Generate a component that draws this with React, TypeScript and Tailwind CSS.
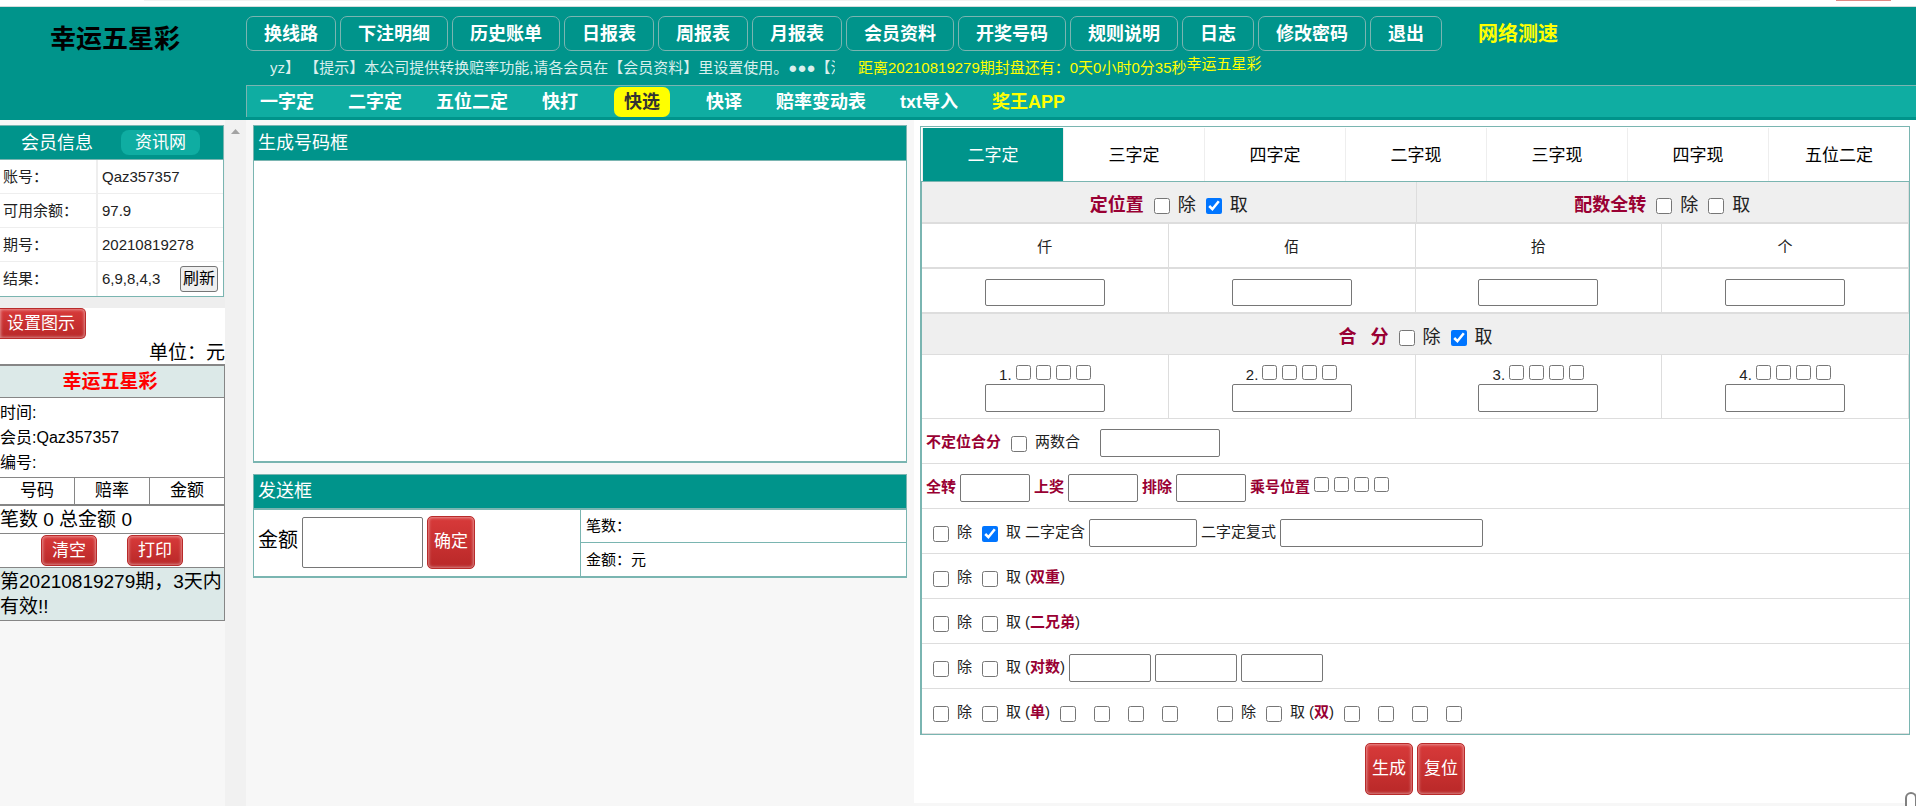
import React, { useState } from 'react';
import clsx from 'clsx';

const mainMenu = [
  '换线路', '下注明细', '历史账单', '日报表', '周报表', '月报表',
  '会员资料', '开奖号码', '规则说明', '日志', '修改密码', '退出',
];

const subMenu = ['一字定', '二字定', '五位二定', '快打', '快选', '快译', '赔率变动表', 'txt导入', '奖王APP'];

const tabs = ['二字定', '三字定', '四字定', '二字现', '三字现', '四字现', '五位二定'];

const member = [
  { label: '账号：', value: 'Qaz357357' },
  { label: '可用余额：', value: '97.9' },
  { label: '期号：', value: '20210819278' },
  { label: '结果：', value: '6,9,8,4,3', refresh: true },
];

const digits = ['仟', '佰', '拾', '个'];

const RedButton = ({ children, className }: { children: React.ReactNode; className?: string }) => (
  <button
    type="button"
    className={clsx(
      'rounded-[5px] border border-[#b92b2b] bg-linear-to-b from-[#d83a3a] to-[#b92828] text-[17px] text-white shadow-[inset_0_0_3px_1px_rgba(255,255,255,0.45)]',
      className
    )}
  >
    {children}
  </button>
);

const TextBox = ({ label, className }: { label: string; className?: string }) => (
  <input
    type="text"
    aria-label={label}
    className={clsx('rounded-[2px] border border-[#767676] bg-white px-1', className)}
  />
);

const Check = ({ label, checked = false }: { label: string; checked?: boolean }) => (
  <label className="flex items-center gap-2">
    <input type="checkbox" defaultChecked={checked} className="mt-[2px] h-4 w-4" />
    {label}
  </label>
);

// 除 / 取 pair
const Pair = ({ take = false }: { take?: boolean }) => (
  <div className="flex gap-[10px]">
    <Check label="除" />
    <Check label="取" checked={take} />
  </div>
);

const SmallChecks = ({ name }: { name: string }) => (
  <div className="flex gap-[5px]">
    {digits.map((d) => (
      <input key={d} type="checkbox" aria-label={`${name} ${d}`} className="h-[15px] w-[15px]" />
    ))}
  </div>
);

const WideChecks = ({ name }: { name: string }) => (
  <div className="flex gap-[18px]">
    {digits.map((d) => (
      <input key={d} type="checkbox" aria-label={`${name} ${d}`} className="mt-[2px] h-4 w-4" />
    ))}
  </div>
);

const Mark = ({ children }: { children: React.ReactNode }) => (
  <span className="font-bold text-[#990033]">{children}</span>
);

const Row = ({ children, className }: { children: React.ReactNode; className?: string }) => (
  <div className={clsx('flex h-[45px] items-center border-b border-[#ddd]', className)}>{children}</div>
);

const Header = () => (
  <header className="flex bg-[#00948b]">
    <h1 className="w-[246px] shrink-0 pt-4 pr-4 text-center text-[26px] leading-8 font-bold text-black">
      幸运五星彩
    </h1>
    <div className="min-w-0 flex-1 pb-[3px]">
      <div className="flex items-center pt-[9px]">
        <nav className="flex gap-1 text-lg font-bold text-white">
          {mainMenu.map((item) => (
            <a
              key={item}
              href="#"
              className="flex h-[35px] items-center rounded-[7px] border border-[#7ab5b1] px-[17px] leading-6 whitespace-nowrap"
            >
              {item}
            </a>
          ))}
        </nav>
        <a href="#" className="ml-9 text-xl leading-7 font-bold whitespace-nowrap text-[#ff0]">网络测速</a>
      </div>
      <div className="flex h-[34px] items-center pl-6 text-[15px] leading-5 whitespace-nowrap">
        <div className="w-[565px] overflow-hidden text-[#d9efed]">
          yz】 【提示】本公司提供转换赔率功能,请各会员在【会员资料】里设置使用。●●●【注
        </div>
        <div className="flex pl-[23px] text-[#ff0]">
          <span>距离20210819279期封盘还有：0天0小时0分35秒</span>
          <span className="-mt-1">幸运五星彩</span>
        </div>
      </div>
      <nav className="flex h-8 items-center gap-[34px] border-t border-l border-[#7ab5b1] bg-[#0fada2] pl-[13px] text-lg font-bold whitespace-nowrap text-white">
        {subMenu.map((item) => (
          <a
            key={item}
            href="#"
            className={clsx(
              'leading-[30px]',
              item === '快选' && 'mx-[2px] rounded-[7px] bg-[#ff0] px-[10px] text-[#333]',
              item === '奖王APP' && 'text-[#ff0]'
            )}
          >
            {item}
          </a>
        ))}
      </nav>
    </div>
  </header>
);

const Sidebar = () => (
  <aside className="w-[225px] shrink-0 pt-[5px]">
    <div className="bg-[#eee] pb-[11px]">
      <div className="mr-px border border-l-0 border-[#7ab5b1] bg-white">
        <div className="flex h-[34px] items-center border-b border-[#7ab5b1] bg-[#00948b] pl-[21px] text-lg text-white">
          会员信息
          <a href="#" className="ml-7 rounded-lg bg-[#0fada2] px-[14px] text-[17px] leading-[25px]">资讯网</a>
        </div>
        <table className="w-full border-separate border-spacing-0 text-[15px] leading-5 text-[#222]">
          <tbody>
            {member.map((row, i) => (
              <tr key={row.label} className="h-[34px]">
                <th
                  scope="row"
                  className={clsx(
                    'w-[98px] border-r-2 border-[#eee] p-0 pl-[3px] text-left font-normal',
                    i < member.length - 1 && 'border-b'
                  )}
                >
                  {row.label}
                </th>
                <td className={clsx('border-[#eee] p-0 pl-1', i < member.length - 1 && 'border-b')}>
                  <div className="flex items-center justify-between pr-[5px]">
                    {row.value}
                    {row.refresh && (
                      <button
                        type="button"
                        className="rounded-[3px] border border-[#767676] bg-[#efefef] px-[2px] text-base leading-6 text-black"
                      >
                        刷新
                      </button>
                    )}
                  </div>
                </td>
              </tr>
            ))}
          </tbody>
        </table>
      </div>
    </div>

    <div className="bg-white text-[19px]">
      <RedButton className="block h-[31px] rounded-l-none border-l-0 pr-[10px] pl-[7px]">设置图示</RedButton>
      <p className="h-[25px] text-right leading-[27px]">单位：元</p>
      <div className="border border-t-2 border-l-0 border-[#868686]">
        <h2 className="h-[31px] bg-[#dce9e8] pr-1 text-center leading-[31px] font-bold text-[#f00]">幸运五星彩</h2>
        <div className="border-t border-[#868686] py-[2px] text-base leading-[25px]">
          <p>时间:</p>
          <p>会员:Qaz357357</p>
          <p>编号:</p>
        </div>
        <table className="w-full table-fixed border-t border-b-2 border-[#868686] text-[17px] leading-[26px]">
          <thead>
            <tr>
              <th className="font-normal">号码</th>
              <th className="border-x border-[#868686] font-normal">赔率</th>
              <th className="font-normal">金额</th>
            </tr>
          </thead>
        </table>
        <p className="leading-[27px]">笔数 0 总金额 0</p>
        <div className="flex h-[35px] items-center justify-center gap-[30px] border-y border-[#868686]">
          <RedButton className="h-[31px] px-[10px]">清空</RedButton>
          <RedButton className="h-[31px] px-[10px]">打印</RedButton>
        </div>
        <p className="bg-[#dce9e8] py-px leading-[25px]">第20210819279期，3天内有效!!</p>
      </div>
    </div>
  </aside>
);

const NumberPanels = () => (
  <section className="w-2/5 px-[7px] pt-[5px]">
    <div className="border border-b-2 border-[#7ab5b1] bg-white">
      <h2 className="border-b border-[#7ab5b1] bg-[#00948b] pl-1 text-lg leading-[34px] text-white">生成号码框</h2>
      <div className="h-[300px]" />
    </div>

    <div className="mt-[11px] border border-b-2 border-[#7ab5b1] bg-white">
      <h2 className="border-b-2 border-[#7ab5b1] bg-[#00948b] pl-1 text-lg leading-[33px] text-white">发送框</h2>
      <div className="grid grid-cols-2">
        <div className="flex h-[66px] items-center gap-1 pb-[2px] pl-1">
          <label htmlFor="amount" className="pb-1 text-xl">金额</label>
          <input
            id="amount"
            type="text"
            className="h-[51px] w-[121px] rounded-[2px] border border-[#767676] px-2 text-xl"
          />
          <RedButton className="h-[53px] px-[6px]">确定</RedButton>
        </div>
        <div className="border-l border-[#7ab5b1] text-[15px] leading-8">
          <p className="border-b border-[#7ab5b1] pl-[5px]">笔数：</p>
          <p className="pt-px pl-[5px]">金额：元</p>
        </div>
      </div>
    </div>
  </section>
);

const QuickPick = () => {
  const [activeTab, setActiveTab] = useState(0);

  return (
    <section className="mb-[3px] w-3/5 bg-white px-[6px] pt-[6px]">
      <div className="border border-[#7ab5b1]">
        <div role="tablist" className="grid grid-cols-7 pt-px pl-px text-[17px]">
          {tabs.map((tab, i) => (
            <button
              key={i}
              type="button"
              role="tab"
              aria-selected={activeTab === i}
              onClick={() => setActiveTab(i)}
              className={clsx(
                'h-[53px] border-l border-[#eee] pt-[2px]',
                activeTab === i ? 'bg-[#00948b] text-white' : 'text-black'
              )}
            >
              {tab}
            </button>
          ))}
        </div>

        <div className="border-t border-l border-[#7ab5b1] text-[15px] text-[#222]">
          <div className="grid h-[42px] grid-cols-2 border-b-2 border-[#ddd] bg-[#efefef] text-lg">
            <div className="flex items-center justify-center gap-[10px] pt-[6px]">
              <Mark>定位置</Mark>
              <Pair take />
            </div>
            <div className="flex items-center justify-center gap-[10px] border-x border-[#ddd] pt-[6px]">
              <Mark>配数全转</Mark>
              <Pair />
            </div>
          </div>

          <div className="grid grid-cols-4 border-b-2 border-[#ddd]">
            {digits.map((d) => (
              <div key={d} className="flex h-[43px] items-center justify-center border-r border-[#ddd] pt-1">{d}</div>
            ))}
          </div>
          <div className="grid grid-cols-4 border-b-2 border-[#ddd]">
            {digits.map((d) => (
              <div key={d} className="flex h-[43px] items-center justify-center border-r border-[#ddd] pt-1">
                <TextBox label={d} className="h-[27px] w-[120px]" />
              </div>
            ))}
          </div>

          <Row className="h-[41px]! justify-center gap-[10px] bg-[#efefef] pt-[6px] text-lg">
            <Mark>
              合<span className="inline-block w-[14px]" />分
            </Mark>
            <Pair take />
          </Row>

          <div className="grid grid-cols-4 border-b border-[#ddd]">
            {digits.map((d, i) => (
              <div key={d} className="flex h-[63px] flex-col items-center border-r border-[#ddd] pt-[10px]">
                <div className="flex items-start gap-1 leading-[19px]">
                  <span>{i + 1}.</span>
                  <SmallChecks name={`合分 ${i + 1}`} />
                </div>
                <TextBox label={`合分值 ${i + 1}`} className="h-7 w-[120px] shrink-0" />
              </div>
            ))}
          </div>

          <Row className="pt-[3px] pl-1">
            <Mark>不定位合分</Mark>
            <div className="ml-[10px]">
              <Check label="两数合" />
            </div>
            <TextBox label="不定位合分" className="ml-5 h-7 w-[120px]" />
          </Row>
          <Row className="gap-1 pt-[3px] pl-1">
            {['全转', '上奖', '排除'].map((name) => (
              <label key={name} className="flex items-center gap-1">
                <Mark>{name}</Mark>
                <input type="text" className="h-7 w-[70px] rounded-[2px] border border-[#767676] bg-white px-1" />
              </label>
            ))}
            <Mark>乘号位置</Mark>
            <div className="pb-[6px]">
              <SmallChecks name="乘号位置" />
            </div>
          </Row>
          <Row className="gap-1 pt-[3px] pl-[11px]">
            <Pair take />
            <span>二字定含</span>
            <TextBox label="二字定含" className="h-7 w-[108px]" />
            <span>二字定复式</span>
            <TextBox label="二字定复式" className="h-7 w-[203px]" />
          </Row>
          <Row className="gap-1 pt-[3px] pl-[11px]">
            <Pair />
            <span>(<Mark>双重</Mark>)</span>
          </Row>
          <Row className="gap-1 pt-[3px] pl-[11px]">
            <Pair />
            <span>(<Mark>二兄弟</Mark>)</span>
          </Row>
          <Row className="gap-1 pt-[3px] pl-[11px]">
            <Pair />
            <span>(<Mark>对数</Mark>)</span>
            <TextBox label="对数一" className="h-7 w-[82px]" />
            <TextBox label="对数二" className="h-7 w-[82px]" />
            <TextBox label="对数三" className="h-7 w-[82px]" />
          </Row>
          <Row className="pt-[3px] pl-[11px]">
            <Pair />
            <span className="mr-[10px] ml-1">(<Mark>单</Mark>)</span>
            <WideChecks name="单" />
            <div className="ml-[39px]">
              <Pair />
            </div>
            <span className="mr-[10px] ml-1">(<Mark>双</Mark>)</span>
            <WideChecks name="双" />
          </Row>
        </div>
      </div>

      <div className="flex justify-center gap-1 py-2">
        <RedButton className="h-[52px] px-[6px]">生成</RedButton>
        <RedButton className="h-[52px] px-[6px]">复位</RedButton>
      </div>
    </section>
  );
};

const App = () => (
  <div className="relative flex min-h-screen flex-col overflow-hidden bg-[#f7f7f7] font-['Liberation_Sans','Noto_Sans_CJK_SC',sans-serif] text-black">
    <div className="flex h-[7px] items-start border-b border-[#d5dcdc] bg-white">
      <div className="ml-36 h-px flex-1 bg-[#f1f1f1]" />
      <div className="mr-[25px] ml-[76px] h-px w-[55px] bg-[#e08a85]" />
    </div>
    <Header />
    <main className="flex flex-1">
      <Sidebar />
      <div className="flex w-[21px] shrink-0 justify-center bg-[#f1f1f1] pt-[9px]">
        <svg width="9" height="5" viewBox="0 0 9 5" fill="#a3a3a3">
          <path d="M4.500 0L9 5H0z" />
        </svg>
      </div>
      <div className="flex min-w-0 flex-1">
        <NumberPanels />
        <QuickPick />
      </div>
    </main>
    <div className="absolute -right-px bottom-0 h-[14px] w-3 rounded-t-md border-2 border-b-0 border-[#808080] bg-white" />
  </div>
);

export default App;
